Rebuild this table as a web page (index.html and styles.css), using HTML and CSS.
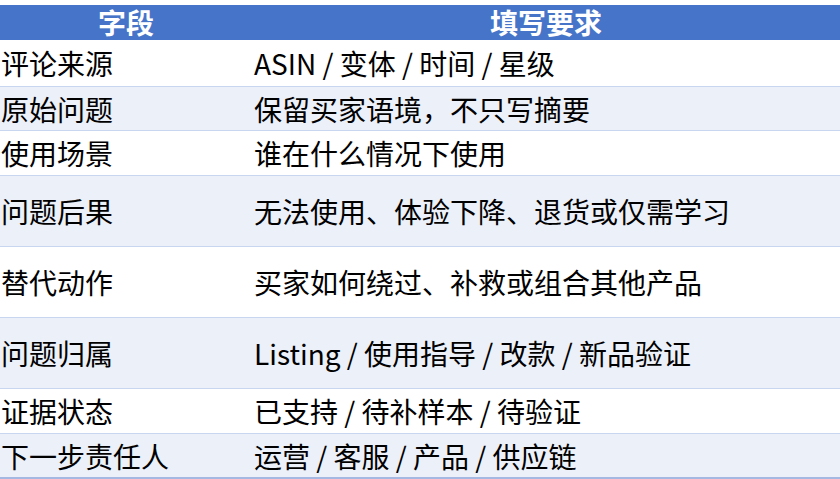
FILE: index.html
```html
<!DOCTYPE html>
<html lang="zh-CN">
<head>
<meta charset="utf-8">
<title>字段 填写要求</title>
<link rel="stylesheet" href="styles.css">
</head>
<body>
<div class="table">
  <div class="row head"><div class="c1">字段</div><div class="c2">填写要求</div></div>
  <div class="row r1"><div class="c1">评论来源</div><div class="c2">ASIN / 变体 / 时间 / 星级</div></div>
  <div class="row r2 alt"><div class="c1">原始问题</div><div class="c2">保留买家语境，不只写摘要</div></div>
  <div class="row r3"><div class="c1">使用场景</div><div class="c2">谁在什么情况下使用</div></div>
  <div class="row tall alt"><div class="c1">问题后果</div><div class="c2">无法使用、体验下降、退货或仅需学习</div></div>
  <div class="row tall"><div class="c1">替代动作</div><div class="c2">买家如何绕过、补救或组合其他产品</div></div>
  <div class="row tall alt"><div class="c1">问题归属</div><div class="c2">Listing / 使用指导 / 改款 / 新品验证</div></div>
  <div class="row r7"><div class="c1">证据状态</div><div class="c2">已支持 / 待补样本 / 待验证</div></div>
  <div class="row r8 alt last"><div class="c1">下一步责任人</div><div class="c2">运营 / 客服 / 产品 / 供应链</div></div>
</div>
</body>
</html>
```

FILE: styles.css
```css
html, body {
  margin: 0;
  padding: 0;
  background: #ffffff;
}
body {
  padding-top: 5px;
  font-family: "Noto Sans CJK SC", "Noto Sans", sans-serif;
  font-size: 28px;
  color: #000000;
}
.table {
  width: 840px;
}
.row {
  display: grid;
  grid-template-columns: 252px 1fr;
  align-items: center;
  box-sizing: border-box;
  background: #ffffff;
  border-bottom: 1px solid #c9d6ef;
}
.row.alt {
  background: #ecf0f9;
}
.c1 {
  padding-left: 1px;
  white-space: nowrap;
}
.c2 {
  padding-left: 2px;
  white-space: nowrap;
}
.head {
  height: 35px;
  background: #4674c8;
  color: #ffffff;
  font-weight: bold;
  border-bottom: none;
  line-height: 35px;
}
.head .c1, .head .c2 {
  text-align: center;
  padding-left: 0;
}
.r1 { height: 47px; }
.r2 { height: 44px; }
.r3 { height: 45px; }
.tall { height: 71px; }
.r7 { height: 45px; }
.r8 { height: 45px; }
.last {
  border-bottom: 2px solid #a4b8e2;
}
```
